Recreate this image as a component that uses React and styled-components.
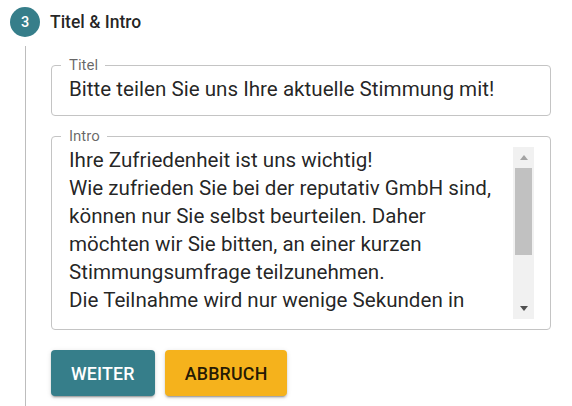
import React from "react";
import styled, { createGlobalStyle } from "styled-components";

const Global = createGlobalStyle`
  html, body { margin: 0; padding: 0; background: #fff; }
  body { font-family: Roboto, "Noto Sans", sans-serif; color: rgba(0,0,0,0.87); }
`;

const Page = styled.div`
  padding: 7px 0 0 10px;
  width: 562px;
  height: 399px;
  overflow: hidden;
`;

const Header = styled.div`
  display: flex;
  align-items: center;
  gap: 10px;
  height: 30px;
`;

const StepBadge = styled.div`
  width: 30px;
  height: 30px;
  border-radius: 50%;
  background: #367e8a;
  color: #fff;
  display: flex;
  align-items: center;
  justify-content: center;
  font-size: 14.5px;
  font-weight: 500;
`;

const StepTitle = styled.div`
  font-size: 17.5px;
  font-weight: 500;
  color: rgba(0,0,0,0.87);
`;

const StepBody = styled.div`
  margin: 9px 0 0 15px;
  border-left: 1px solid #bdbdbd;
  padding: 11px 0 20px 25px;
  display: flex;
  flex-direction: column;
  gap: 12px;
`;

const Field = styled.fieldset`
  margin: 0;
  width: 500px;
  box-sizing: border-box;
  border: 1px solid #c4c4c4;
  border-radius: 4px;
  padding: 0 ${p => (p.$multi ? "16px" : "9px")} ${p => (p.$multi ? "10px" : "12px")} 9px;
  min-width: 0;
`;

const Legend = styled.legend`
  padding: 0 7px 0 8px;
  font-size: 15px;
  line-height: 16px;
  color: rgba(0,0,0,0.6);
`;

const Value = styled.div`
  padding: 2px 0 0 8px;
  font-size: 20.6px;
  line-height: 28px;
  white-space: nowrap;
`;

const MultiRow = styled.div`
  display: flex;
  height: 172px;
  margin-top: 3px;
`;

const MultiText = styled.div`
  flex: 1;
  align-self: flex-start;
  height: 169px;
  padding-left: 8px;
  margin-top: -1px;
  font-size: 20.6px;
  line-height: 28px;
  overflow: hidden;
  white-space: nowrap;
`;

const Scrollbar = styled.div`
  width: 21px;
  background: #f1f1f1;
  display: flex;
  flex-direction: column;
  align-items: center;
`;

const ScrollArrow = styled.div`
  height: 21px;
  display: flex;
  align-items: center;
  justify-content: center;
`;

const Thumb = styled.div`
  width: 17px;
  height: 87px;
  background: #c1c1c1;
`;

const Track = styled.div`
  flex: 1;
  display: flex;
  flex-direction: column;
`;

const Buttons = styled.div`
  display: flex;
  gap: 10px;
  margin-top: 8px;
`;

const Button = styled.button`
  height: 46px;
  padding: 0 20px;
  border: none;
  border-radius: 4px;
  font-family: Roboto, sans-serif;
  font-size: 17.8px;
  font-weight: 500;
  letter-spacing: 0.2px;
  text-transform: uppercase;
  background: ${p => (p.$variant === "cancel" ? "#f5b21c" : "#367e8a")};
  color: ${p => (p.$variant === "cancel" ? "rgba(0,0,0,0.87)" : "#fff")};
  box-shadow: 0 3px 1px -2px rgba(0,0,0,0.2), 0 2px 2px 0 rgba(0,0,0,0.14), 0 1px 5px 0 rgba(0,0,0,0.12);
  cursor: pointer;
`;

const lines = [
  "Ihre Zufriedenheit ist uns wichtig!",
  "Wie zufrieden Sie bei der reputativ GmbH sind,",
  "können nur Sie selbst beurteilen. Daher",
  "möchten wir Sie bitten, an einer kurzen",
  "Stimmungsumfrage teilzunehmen.",
  "Die Teilnahme wird nur wenige Sekunden in",
];

export default function App() {
  return (
    <>
      <Global />
      <Page>
        <Header>
          <StepBadge>3</StepBadge>
          <StepTitle>Titel &amp; Intro</StepTitle>
        </Header>
        <StepBody>
          <Field>
            <Legend>Titel</Legend>
            <Value>Bitte teilen Sie uns Ihre aktuelle Stimmung mit!</Value>
          </Field>
          <Field $multi>
            <Legend>Intro</Legend>
            <MultiRow>
              <MultiText>
                {lines.map((l, i) => (
                  <div key={i}>{l}</div>
                ))}
              </MultiText>
              <Scrollbar>
                <ScrollArrow>
                  <svg width="8" height="5" viewBox="0 0 8 5"><path d="M0 5 L4 0 L8 5 Z" fill="#a3a3a3" /></svg>
                </ScrollArrow>
                <Track>
                  <Thumb />
                </Track>
                <ScrollArrow>
                  <svg width="8" height="5" viewBox="0 0 8 5"><path d="M0 0 L4 5 L8 0 Z" fill="#505050" /></svg>
                </ScrollArrow>
              </Scrollbar>
            </MultiRow>
          </Field>
          <Buttons>
            <Button>Weiter</Button>
            <Button $variant="cancel">Abbruch</Button>
          </Buttons>
        </StepBody>
      </Page>
    </>
  );
}
